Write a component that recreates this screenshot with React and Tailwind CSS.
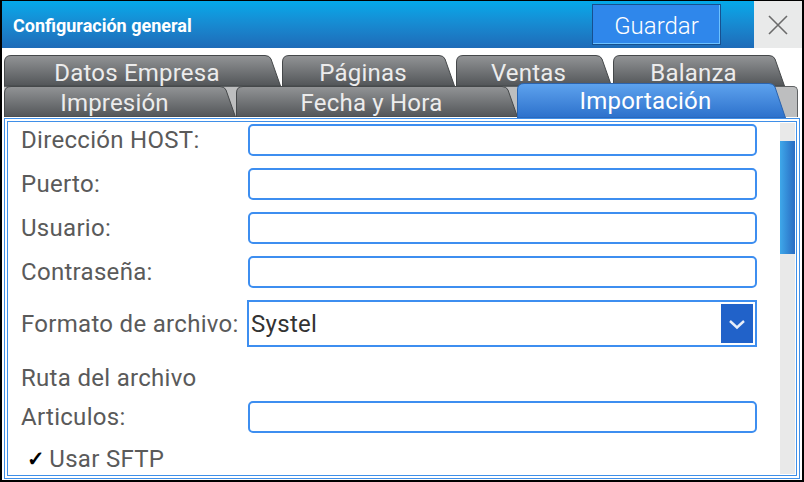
import React from "react";

const FONT = { fontFamily: "Roboto, 'Noto Sans', sans-serif" };

function Tab({ label, w, h = 31, s = 11, active = false, cls, textCls = "" }) {
  const id = "g" + label.replace(/[^a-zA-Z]/g, "");
  const d = `M0.5 ${h} L0.5 7 Q0.5 0.5 7 0.5 L${w - s - 5} 0.5 Q${w - s - 0.5} 0.5 ${w - s + 1} 4 L${w - 0.5} ${h} Z`;
  return (
    <div className={`relative shrink-0 ${cls}`}>
      <svg className="absolute left-0 top-0" width={w} height={h} viewBox={`0 0 ${w} ${h}`}>
        <defs>
          <linearGradient id={id} x1="0" y1="0" x2="0" y2="1">
            {active ? (
              <>
                <stop offset="0" stopColor="#5ea3ee" />
                <stop offset="1" stopColor="#2c70cb" />
              </>
            ) : (
              <>
                <stop offset="0" stopColor="#929496" />
                <stop offset="1" stopColor="#525558" />
              </>
            )}
          </linearGradient>
        </defs>
        <path d={d} fill={`url(#${id})`} stroke={active ? "#2a63ae" : "#45484a"} strokeWidth="1" />
      </svg>
      <div
        className={`relative flex h-full items-start justify-center overflow-hidden text-[24px] leading-none tracking-[0.2px] ${active ? "text-white" : "text-[#ececec]"} ${textCls}`}
        style={{ paddingRight: s }}
      >
        <span className="block">{label}</span>
      </div>
    </div>
  );
}

function Input() {
  return <div className="h-[32px] w-[509px] rounded-[5px] border-2 border-[#3d8ef0] bg-white" />;
}

function Row({ label, children, cls = "h-[32px]" }) {
  return (
    <div className={`flex items-center ${cls}`}>
      <div className="w-[227px] text-[24px] leading-none tracking-[0.3px] text-[#5a5a5a]">{label}</div>
      {children}
    </div>
  );
}

export default function App() {
  return (
    <div className="h-[482px] w-[804px] bg-black pb-[2px] pl-[2px] pr-[2px] pt-[1px]" style={FONT}>
      <div className="flex h-full w-full flex-col bg-white">
        {/* Header */}
        <div className="flex h-[47px] shrink-0 items-stretch bg-gradient-to-b from-[#03a9ea] to-[#1e6bb8]">
          <div className="flex flex-1 items-center pl-[11px] pt-[1px] text-[18px] font-bold text-white">
            Configuración general
          </div>
          <div className="mr-[33px] mt-[3px] flex h-[41px] w-[129px] items-center justify-center border border-[#17508f] bg-[#2f87eb] pt-[2px] text-[24px] font-light text-white shadow-[inset_-1px_-1px_0_#6cc2ff]">
            Guardar
          </div>
          <div className="flex w-[48px] items-center justify-center bg-[#e9eaea]">
            <svg width="20" height="20" viewBox="0 0 20 20">
              <path d="M1 1 L19 19 M19 1 L1 19" stroke="#6b6b6b" strokeWidth="1.6" />
            </svg>
          </div>
        </div>

        {/* Tabs row 1 */}
        <div className="ml-[2px] mt-[7px] flex h-[31px] shrink-0">
          <Tab label="Datos Empresa" w={277} cls="h-[31px] w-[277px]" textCls="pt-[6px]" />
          <Tab label="Páginas" w={173} cls="ml-[1px] h-[31px] w-[173px]" textCls="pt-[6px]" />
          <Tab label="Ventas" w={156} cls="ml-[1px] h-[31px] w-[156px]" textCls="pt-[6px]" />
          <Tab label="Balanza" w={172} cls="ml-[1px] h-[31px] w-[172px]" textCls="pt-[6px]" />
        </div>

        {/* Tabs row 2 */}
        <div className="ml-[2px] mr-[4px] flex h-[31px] shrink-0 rounded-tr-[5px] border-r border-t border-[#5e6163] bg-[#bdbebf]">
          <Tab label="Impresión" w={232} cls="-mt-[1px] h-[31px] w-[232px]" textCls="pt-[5px]" />
          <Tab label="Fecha y Hora" w={282} cls="-mt-[1px] h-[31px] w-[282px]" textCls="pt-[5px]" />
          <Tab label="Importación" w={269} h={35} s={12} active cls="-ml-[1px] -mt-[4px] h-[35px] w-[269px]" textCls="pt-[6px]" />
        </div>

        {/* Content panel */}
        <div className="mb-[1px] ml-[2px] mr-[2px] mt-[1px] flex flex-1 border border-[#3f8fe8] p-[2px]">
          <div className="flex flex-1 border border-[#3f8fe8]">
            <div className="flex flex-1 flex-col pl-[13px] pt-[2px]">
              <Row label="Dirección HOST:"><Input /></Row>
              <Row label="Puerto:" cls="mt-[12px] h-[32px]"><Input /></Row>
              <Row label="Usuario:" cls="mt-[12px] h-[32px]"><Input /></Row>
              <Row label="Contraseña:" cls="mt-[12px] h-[32px]"><Input /></Row>
              <Row label="Formato de archivo:" cls="mt-[12px] h-[47px]">
                <div className="-ml-[1px] flex h-[47px] w-[510px] items-center border-2 border-[#3d8ef0] bg-white pl-[2px] pr-[2px]">
                  <span className="flex-1 text-[24px] leading-none tracking-[0.3px] text-[#333]">Systel</span>
                  <div className="flex h-[39px] w-[32px] items-center justify-center bg-[#2162c9]">
                    <svg width="18" height="12" viewBox="0 0 18 12">
                      <path d="M2 3 L9 9.5 L16 3" fill="none" stroke="#e8eef8" strokeWidth="2.4" />
                    </svg>
                  </div>
                </div>
              </Row>
              <div className="mt-[12px] flex h-[38px] items-center text-[24px] leading-none tracking-[0.3px] text-[#5a5a5a]">
                Ruta del archivo
              </div>
              <Row label="Articulos:" cls="mt-[4px] h-[32px]"><Input /></Row>
              <div className="mt-[10px] flex h-[32px] items-center pl-[6px] text-[24px] leading-none tracking-[0.3px] text-[#5a5a5a]">
                <span className="mr-[4px] text-[21px] font-bold text-black">✓</span>
                Usar SFTP
              </div>
            </div>
            <div className="mb-[1px] mr-[1px] mt-[1px] flex w-[15px] flex-col bg-[#e9e9e9]">
              <div className="mt-[18px] h-[113px] bg-gradient-to-r from-[#3fa8ea] to-[#2a6bc2]" />
            </div>
          </div>
        </div>
      </div>
    </div>
  );
}
